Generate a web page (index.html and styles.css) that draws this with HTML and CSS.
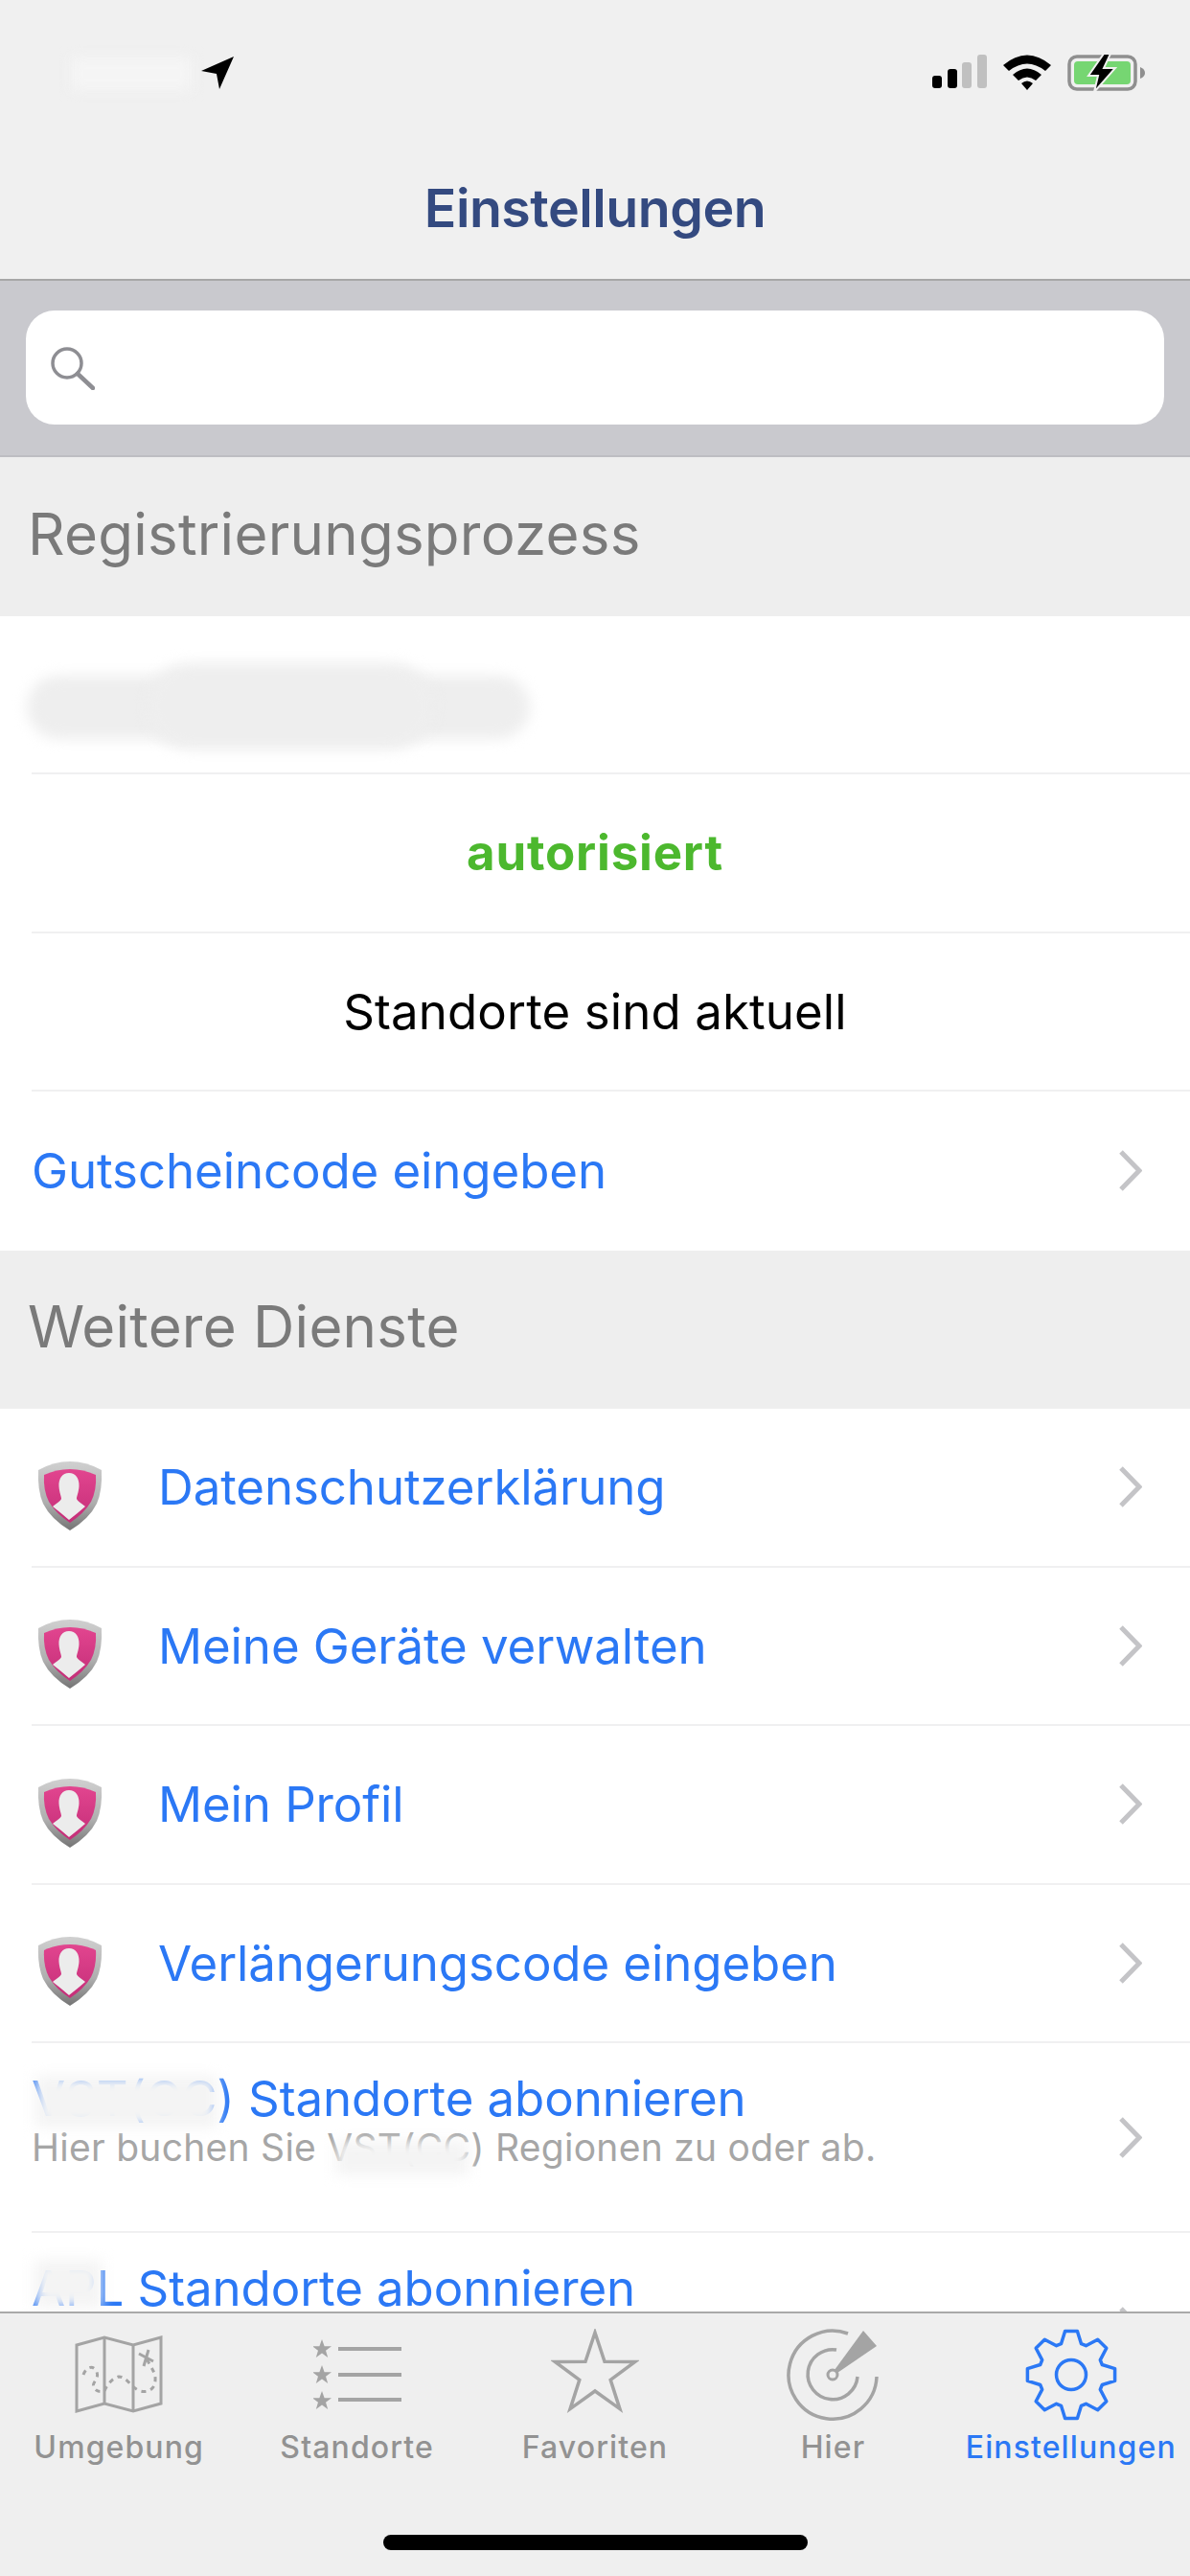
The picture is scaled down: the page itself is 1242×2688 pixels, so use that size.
FILE: index.html
```html
<!DOCTYPE html>
<html lang="de">
<head>
  <meta charset="UTF-8" />
  <meta name="viewport" content="width=device-width, initial-scale=1" />
  <title>Einstellungen</title>
  <link rel="stylesheet" href="styles.css">
</head>
<body>

  <!-- shared shield icon -->
  <svg class="defs" width="0" height="0">
    <defs>
      <linearGradient id="rim" x1="0" y1="0" x2="0" y2="1">
        <stop offset="0" stop-color="#d0d0d0" />
        <stop offset="0.6" stop-color="#aeaeae" />
        <stop offset="1" stop-color="#747474" />
      </linearGradient>
      <linearGradient id="pink" x1="0" y1="0" x2="0" y2="1">
        <stop offset="0" stop-color="#e2458f" />
        <stop offset="1" stop-color="#c42e78" />
      </linearGradient>
      <symbol id="shield" viewBox="0 0 68 72">
        <path d="M1 9 Q17 0 34 0 Q51 0 67 9 Q68 30 62 44 Q54 60 34 72 Q14 60 6 44 Q0 30 1 9Z" fill="url(#rim)" />
        <path d="M7 14 Q20 8 34 8 Q48 8 61 14 Q62 30 56 42 Q49 54 34 64 Q19 54 12 42 Q6 30 7 14Z" fill="url(#pink)" />
        <path d="M33 12 C40 12 44 18 43.5 26 C43 33 41 36 41 39 C42 42 47 44 50 47 Q42 54 33 61 Q25 54 16 47 C19 44 24 42 25 39 C25 36 23 33 22.5 26 C22 18 26 12 33 12Z" fill="#ececec" />
      </symbol>
      <symbol id="chevron" viewBox="0 0 25 43">
        <path d="M3 2 L22 21.5 L3 41" fill="none" stroke="#c4c4c7" stroke-width="5" />
      </symbol>
    </defs>
  </svg>

  <div class="app">

    <header class="top">
      <div class="status">
        <div class="status-left">
          <span class="smudge smudge-time"></span>
          <svg class="arrow" width="34" height="34" viewBox="0 0 34 34"><path d="M34 0 L19 34 L16 18 L0 15Z" fill="#000" /></svg>
        </div>
        <div class="status-right">
          <svg width="57" height="35" viewBox="0 0 57 35">
            <rect x="0" y="22" width="10" height="13" rx="3" fill="#000" />
            <rect x="16" y="15" width="10" height="20" rx="3" fill="#000" />
            <rect x="31" y="8" width="10" height="27" rx="3" fill="#c0c0c0" />
            <rect x="47" y="0" width="10" height="35" rx="3" fill="#c0c0c0" />
          </svg>
          <svg width="50" height="37" viewBox="0 0 50 37">
            <path d="M0 11 Q25 -10 50 11 L44 17 Q25 2 6 17Z" fill="#000" />
            <path d="M10 21 Q25 8 40 21 L34 27 Q25 20 16 27Z" fill="#000" />
            <path d="M19 30 Q25 25 31 30 L25 37Z" fill="#000" />
          </svg>
          <svg width="81" height="38" viewBox="0 0 81 38">
            <rect x="2" y="2" width="69" height="34" rx="8" fill="none" stroke="#8f8f8f" stroke-width="3.5" />
            <rect x="7" y="7" width="59" height="24" rx="4" fill="#76d672" />
            <path d="M76 13 Q81 15 81 19 Q81 23 76 25Z" fill="#8f8f8f" />
            <path d="M38 -1 L22 22 L32 22 L28 39 L50 14 L38 14 L45 -1Z" fill="#000" stroke="#f0f0f0" stroke-width="2" />
          </svg>
        </div>
      </div>
      <h1 class="title">Einstellungen</h1>
    </header>

    <div class="search-band">
      <div class="search-field">
        <svg width="48" height="46" viewBox="0 0 48 46">
          <circle cx="19" cy="18" r="15" fill="none" stroke="#8e8e93" stroke-width="3.5" />
          <path d="M30 29 L46 44" stroke="#8e8e93" stroke-width="4.5" stroke-linecap="round" />
        </svg>
      </div>
    </div>

    <main class="list">
      <h2 class="section">Registrierungsprozess</h2>
      <div class="row"><span class="smudge smudge-name"></span><span class="smudge smudge-name2"></span></div>
      <div class="row row-center"><span class="ok">autorisiert</span></div>
      <div class="row row-center"><span class="plain">Standorte sind aktuell</span></div>
      <a class="row row-last"><span class="link">Gutscheincode eingeben</span><svg class="chev"><use href="#chevron" /></svg></a>

      <h2 class="section">Weitere Dienste</h2>
      <a class="row"><svg class="shield"><use href="#shield" /></svg><span class="link">Datenschutzerklärung</span><svg class="chev"><use href="#chevron" /></svg></a>
      <a class="row"><svg class="shield"><use href="#shield" /></svg><span class="link">Meine Geräte verwalten</span><svg class="chev"><use href="#chevron" /></svg></a>
      <a class="row"><svg class="shield"><use href="#shield" /></svg><span class="link">Mein Profil</span><svg class="chev"><use href="#chevron" /></svg></a>
      <a class="row"><svg class="shield"><use href="#shield" /></svg><span class="link">Verlängerungscode eingeben</span><svg class="chev"><use href="#chevron" /></svg></a>
      <a class="row row-tall">
        <div class="stack">
          <span class="link">VST(CC) Standorte abonnieren</span>
          <span class="sub">Hier buchen Sie VST(CC) Regionen zu oder ab.</span>
        </div>
        <svg class="chev"><use href="#chevron" /></svg>
        <span class="smudge smudge-vst"></span>
        <span class="smudge smudge-vst2"></span>
      </a>
      <a class="row row-tall">
        <div class="stack">
          <span class="link">APL Standorte abonnieren</span>
        </div>
        <svg class="chev"><use href="#chevron" /></svg>
        <span class="smudge smudge-apl"></span>
      </a>
    </main>

    <nav class="tabs">
      <div class="tab">
        <svg class="tab-icon" width="92" height="96" viewBox="0 0 92 96">
          <g transform="translate(0 8)" fill="none" stroke="#a4a4a4">
            <path d="M2 9 L31 1 L61 9 L90 1 L90 70 L61 78 L31 70 L2 78Z" stroke-width="3" />
            <path d="M31 1 V70 M61 9 V78" stroke-width="3" />
            <path d="M9 40 C12 32 19 29 23 37 C26 45 17 48 20 53 C22 58 27 58 31 57 C33 52 38 44 46 42 C54 42 58 52 66 56 C74 60 84 56 84 46 C85 38 79 32 75 23" stroke-width="3" stroke-dasharray="5 5" />
            <path d="M67 18 L82 26 M77 14 L72 31" stroke-width="3" />
          </g>
        </svg>
        <span class="tab-label">Umgebung</span>
      </div>
      <div class="tab">
        <svg class="tab-icon" width="92" height="96" viewBox="0 0 92 96" fill="#a4a4a4">
          <path d="M9 11 L11.6 18.2 L19 18.2 L13 22.7 L15.2 30 L9 25.6 L2.8 30 L5 22.7 L-1 18.2 L6.4 18.2Z" />
          <path d="M9 38 L11.6 45.2 L19 45.2 L13 49.7 L15.2 57 L9 52.6 L2.8 57 L5 49.7 L-1 45.2 L6.4 45.2Z" />
          <path d="M9 65 L11.6 72.2 L19 72.2 L13 76.7 L15.2 84 L9 79.6 L2.8 84 L5 76.7 L-1 72.2 L6.4 72.2Z" />
          <rect x="26" y="19" width="66" height="4" /><rect x="26" y="46" width="66" height="4" /><rect x="26" y="72" width="66" height="4" />
        </svg>
        <span class="tab-label">Standorte</span>
      </div>
      <div class="tab">
        <svg class="tab-icon" width="92" height="96" viewBox="-46 -48 92 96">
          <path d="M0 -44 L10 -13.8 L41.8 -13.6 L16.2 5.3 L25.9 35.6 L0 17 L-25.9 35.6 L-16.2 5.3 L-41.8 -13.6 L-10 -13.8Z" fill="none" stroke="#a4a4a4" stroke-width="3.5" />
        </svg>
        <span class="tab-label">Favoriten</span>
      </div>
      <div class="tab">
        <svg class="tab-icon" width="96" height="96" viewBox="0 0 96 96" fill="none" stroke="#a4a4a4">
          <path d="M94 50 A46 46 0 1 1 64 5" stroke-width="3.5" />
          <path d="M74 50 A26 26 0 1 1 52 22" stroke-width="3.5" />
          <circle cx="48" cy="48" r="5" stroke-width="3" />
          <path d="M50 43 L80 2 L94 18 L53 46Z" fill="#a4a4a4" stroke="none" />
        </svg>
        <span class="tab-label">Hier</span>
      </div>
      <div class="tab tab-active">
        <svg class="tab-icon" width="96" height="96" viewBox="-48 -48 96 96" fill="none" stroke="#2b78f5" stroke-width="3.5" stroke-linejoin="round">
          <path d="M-10.5 -32.3 L-6.4 -45.6 L6.4 -45.6 L10.5 -32.3 L15.4 -30.3 L27.7 -36.8 L36.8 -27.7 L30.3 -15.4 L32.3 -10.5 L45.6 -6.4 L45.6 6.4 L32.3 10.5 L30.3 15.4 L36.8 27.7 L27.7 36.8 L15.4 30.3 L10.5 32.3 L6.4 45.6 L-6.4 45.6 L-10.5 32.3 L-15.4 30.3 L-27.7 36.8 L-36.8 27.7 L-30.3 15.4 L-32.3 10.5 L-45.6 6.4 L-45.6 -6.4 L-32.3 -10.5 L-30.3 -15.4 L-36.8 -27.7 L-27.7 -36.8 L-15.4 -30.3Z" />
          <circle r="15.5" />
        </svg>
        <span class="tab-label">Einstellungen</span>
      </div>
      <span class="home-bar"></span>
    </nav>

  </div>

</body>
</html>
```

FILE: styles.css
```css
body {
  margin: 0;
  background: #fff;
  font-family: Inter, "Noto Sans", sans-serif;
}
.defs {
  position: absolute;
}
.app {
  width: 1242px;
  height: 2688px;
  display: flex;
  flex-direction: column;
  overflow: hidden;
}

/* header */
.top {
  height: 291px;
  flex: none;
  background: #f0f0f0;
  border-bottom: 2px solid #a7a7a7;
}
.status {
  height: 150px;
  padding: 57px 47px 0 210px;
  box-sizing: border-box;
  display: flex;
  justify-content: space-between;
  align-items: flex-start;
}
.status-left {
  display: flex;
}
.arrow {
  margin-top: 2px;
}
.status-right {
  display: flex;
  align-items: flex-start;
  gap: 17px;
}
.title {
  margin: 37px 0 0;
  text-align: center;
  font-size: 55.5px;
  line-height: 60px;
  font-weight: 600;
  letter-spacing: -0.5px;
  color: #344a80;
}

/* search */
.search-band {
  height: 184px;
  flex: none;
  box-sizing: border-box;
  padding: 31px 27px 32px;
  background: #c9c9ce;
  border-bottom: 2px solid #bdbdc2;
}
.search-field {
  height: 119px;
  display: flex;
  align-items: center;
  padding-left: 24px;
  background: #fff;
  border-radius: 30px;
}

/* list */
.list {
  flex: 1;
  min-height: 0;
  overflow: hidden;
}
.section {
  height: 165.5px;
  margin: 0;
  box-sizing: border-box;
  padding: 0 0 6px 29px;
  display: flex;
  align-items: center;
  background: #eeeeee;
  font-size: 60px;
  font-weight: 400;
  letter-spacing: 0.25px;
  color: #7a7a7a;
}
.row {
  position: relative;
  height: 165.5px;
  box-sizing: border-box;
  margin-left: 33px;
  padding-right: 50px;
  display: flex;
  align-items: center;
  border-bottom: 2px solid #f0f0f1;
  font-size: 51px;
}
.row-last {
  border-bottom: none;
}
.row-center {
  justify-content: center;
  padding-right: 33px;
}
.row-tall {
  height: 198px;
}
.link {
  color: #2b78f5;
  letter-spacing: -0.1px;
  white-space: nowrap;
}
.ok {
  color: #4cb82e;
  font-weight: 700;
  letter-spacing: 0.8px;
}
.plain {
  color: #000;
  letter-spacing: 0.1px;
}
.shield {
  width: 68px;
  height: 72px;
  margin: 18px 58px 0 6px;
  flex: none;
}
.chev {
  width: 25px;
  height: 43px;
  margin-left: auto;
  flex: none;
}
.stack {
  display: flex;
  flex-direction: column;
  height: 102px;
  margin-top: -32px;
}
.stack .link {
  line-height: 54px;
}
.sub {
  color: #a6a6a6;
  font-size: 39px;
  line-height: 48px;
  letter-spacing: 0.27px;
  white-space: nowrap;
}

/* paint-overs */
.smudge {
  position: absolute;
  display: block;
  background: #f2f2f2;
  filter: blur(7px);
}
.smudge-time {
  left: 75px;
  top: 60px;
  width: 125px;
  height: 34px;
  background: #f5f5f5;
}
.smudge-name {
  left: -5px;
  top: 62px;
  width: 525px;
  height: 66px;
  border-radius: 34px;
  background: #eeeeee;
}
.smudge-name2 {
  left: 120px;
  top: 49px;
  width: 300px;
  height: 90px;
  border-radius: 45px;
  background: #eeeeee;
}
.smudge-vst {
  left: 4px;
  top: 34px;
  width: 190px;
  height: 54px;
  background: #f4f4f4;
}
.smudge-vst2 {
  left: 318px;
  top: 102px;
  width: 138px;
  height: 36px;
  background: #f4f4f4;
}
.smudge-apl {
  left: 3px;
  top: 28px;
  width: 70px;
  height: 50px;
  background: #f4f4f4;
}

/* tab bar */
.tabs {
  position: relative;
  height: 276px;
  flex: none;
  box-sizing: border-box;
  padding: 16px 0 0;
  display: grid;
  grid-template-columns: repeat(5, 1fr);
  background: #efefef;
  border-top: 2px solid #a9a9a9;
}
.tab {
  display: flex;
  flex-direction: column;
  align-items: center;
}
.tab-icon {
  height: 96px;
}
.tab-label {
  margin-top: 8px;
  font-size: 32px;
  line-height: 40px;
  font-weight: 500;
  letter-spacing: 1.1px;
  color: #929292;
  white-space: nowrap;
}
.tab-active .tab-label {
  color: #2b78f5;
}
.home-bar {
  position: absolute;
  left: 400px;
  top: 231px;
  width: 443px;
  height: 16px;
  border-radius: 8px;
  background: #000;
}
```
